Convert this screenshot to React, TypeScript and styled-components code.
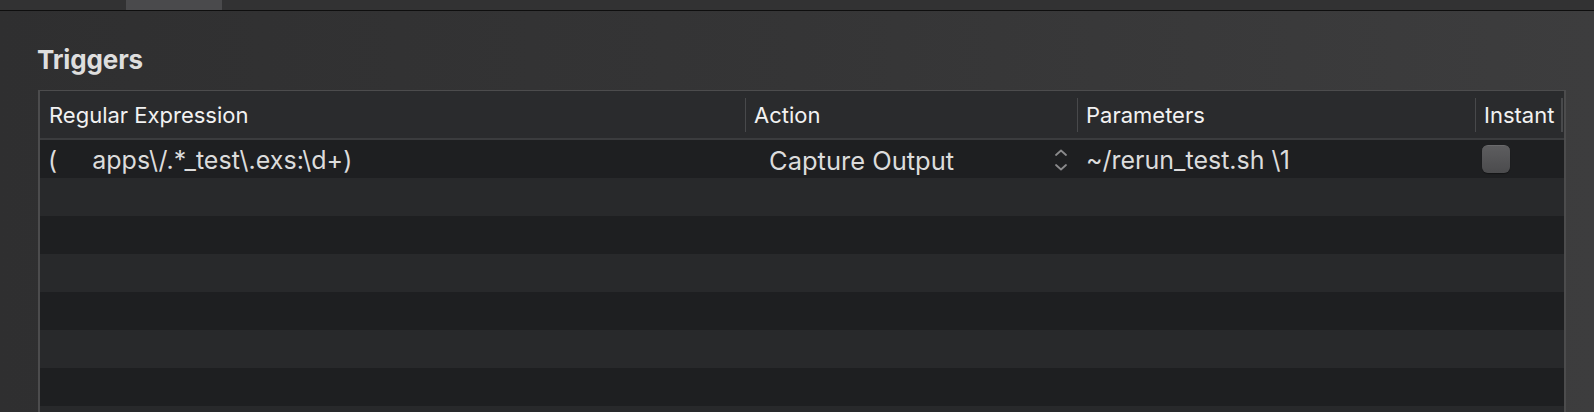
import React from 'react'
import styled, { createGlobalStyle } from 'styled-components'

const GlobalStyle = createGlobalStyle`
  html, body {
    margin: 0;
    padding: 0;
    height: 100%;
    overflow: hidden;
  }
  body {
    background: linear-gradient(to right, #2f2f30 0%, #353536 50%, #3d3d3e 100%);
    font-family: Inter, "Noto Sans", "Liberation Sans", sans-serif;
    -webkit-font-smoothing: antialiased;
  }
`

const rows = [
  { regex: '(     apps\\/.*_test\\.exs:\\d+)', action: 'Capture Output', params: '~/rerun_test.sh \\1' },
]

const EMPTY_ROWS = 7
const COLUMNS = '705px 332px 398px 1fr'

const App: React.FC = () => {
  return (
    <>
      <GlobalStyle />
      <StyledTabStrip>
        <StyledTab />
      </StyledTabStrip>
      <StyledSection>
        <StyledTitle>Triggers</StyledTitle>
        <StyledTable>
          <StyledHeader>
            <StyledHeaderCell>Regular Expression</StyledHeaderCell>
            <StyledHeaderCell $divider>Action</StyledHeaderCell>
            <StyledHeaderCell $divider>Parameters</StyledHeaderCell>
            <StyledHeaderCell $divider $endDivider>Instant</StyledHeaderCell>
          </StyledHeader>
          {rows.map((r, i) => (
            <StyledRow key={i} $striped={i % 2 === 1}>
              <StyledCell>{r.regex}</StyledCell>
              <StyledPopup>
                <span>{r.action}</span>
                <svg width="16" height="22" viewBox="0 0 16 22">
                  <path d="M3 6 L8 1.5 L13 6" fill="none" stroke="#8a8a8c" strokeWidth="1.8" strokeLinecap="round" strokeLinejoin="round" />
                  <path d="M3 16 L8 20.5 L13 16" fill="none" stroke="#8a8a8c" strokeWidth="1.8" strokeLinecap="round" strokeLinejoin="round" />
                </svg>
              </StyledPopup>
              <StyledCell $pad={9}>{r.params}</StyledCell>
              <StyledCheckCell>
                <StyledCheckbox />
              </StyledCheckCell>
            </StyledRow>
          ))}
          {Array.from({ length: EMPTY_ROWS }).map((_, i) => (
            <StyledRow key={`e${i}`} $striped={(i + rows.length) % 2 === 1} />
          ))}
        </StyledTable>
      </StyledSection>
    </>
  )
}

const StyledTabStrip = styled.div`
  display: flex;
  height: 10px;
  padding-left: 126px;
  background: #323233;
  border-bottom: 1px solid #0e0e0e;
`

const StyledTab = styled.div`
  width: 96px;
  height: 10px;
  background: #4a4a4c;
`

const StyledSection = styled.div`
  padding: 33px 28px 0 38px;
`

const StyledTitle = styled.h2`
  margin: 0 0 14px -1px;
  font-size: 26px;
  line-height: 32px;
  font-weight: 700;
  letter-spacing: -0.15px;
  color: #dedede;
`

const StyledTable = styled.div`
  width: 1524px;
  border: 2px solid #4c4c4d;
  border-top-width: 1px;
  border-bottom: none;
`

const StyledHeader = styled.div`
  display: grid;
  grid-template-columns: ${COLUMNS};
  height: 47px;
  background: #2a2b2d;
  border-bottom: 2px solid #3b3c3e;
`

const StyledHeaderCell = styled.div<{ $divider?: boolean; $endDivider?: boolean }>`
  position: relative;
  display: flex;
  align-items: center;
  padding-left: 9px;
  font-size: 22px;
  color: #f2f2f2;
  white-space: nowrap;
  overflow: hidden;

  &::before {
    content: '';
    display: ${(p) => (p.$divider ? 'block' : 'none')};
    position: absolute;
    left: 0;
    top: 7px;
    bottom: 6px;
    width: 1px;
    background: #48494b;
  }

  &::after {
    content: '';
    display: ${(p) => (p.$endDivider ? 'block' : 'none')};
    position: absolute;
    right: 1px;
    top: 7px;
    bottom: 6px;
    width: 2px;
    background: #48494b;
  }
`

const StyledRow = styled.div<{ $striped: boolean }>`
  display: grid;
  grid-template-columns: ${COLUMNS};
  height: 38px;
  background: ${(p) => (p.$striped ? '#28292b' : '#1e1f21')};
`

const StyledCell = styled.div<{ $pad?: number }>`
  display: flex;
  align-items: center;
  padding: 2px 0 0 ${(p) => p.$pad ?? 8}px;
  font-size: 25px;
  color: #dcdcdc;
  white-space: pre;
  overflow: hidden;
`

const StyledPopup = styled.div`
  display: flex;
  align-items: center;
  justify-content: space-between;
  padding: 2px 8px 0 24px;
  font-size: 25.5px;
  color: #dcdcdc;
  white-space: nowrap;

  svg {
    flex-shrink: 0;
  }
`

const StyledCheckCell = styled.div`
  display: flex;
  align-items: center;
  padding-left: 7px;
`

const StyledCheckbox = styled.div`
  width: 28px;
  height: 28px;
  box-sizing: border-box;
  border-radius: 6px;
  background: linear-gradient(to bottom, #5d5d5f, #4b4b4d);
  border-top: 1px solid #6a6a6c;
  box-shadow: 0 1px 1px rgba(0, 0, 0, 0.35);
`

export default App
